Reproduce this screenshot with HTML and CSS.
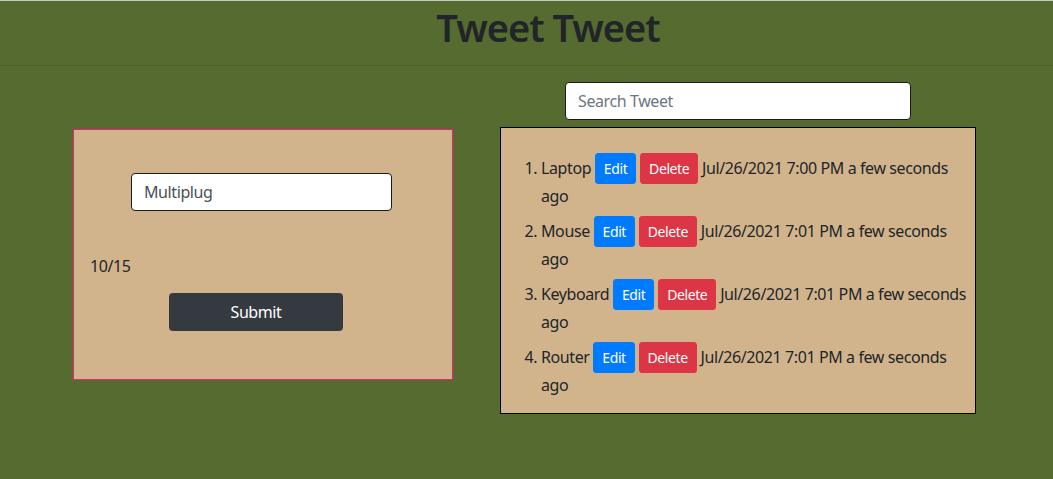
FILE: index.html
```html
<!DOCTYPE html>
<html lang="en">
<head>
<meta charset="utf-8">
<title>Tweet Tweet</title>
<link rel="stylesheet" href="styles.css">
</head>
<body>
<header class="site-header">
  <h1 class="site-title">Tweet Tweet</h1>
</header>
<main class="layout">
  <section class="composer">
    <div class="composer-card">
      <input class="text-input composer-input" type="text" value="Multiplug">
      <div class="char-count">10/15</div>
      <button class="btn-submit" type="button">Submit</button>
    </div>
  </section>
  <section class="feed">
    <input class="text-input search-input" type="text" placeholder="Search Tweet">
    <div class="feed-card">
      <ol class="tweet-list">
        <li class="tweet">Laptop <button class="btn-sm btn-edit" type="button">Edit</button> <button class="btn-sm btn-delete" type="button">Delete</button> Jul/26/2021 7:00 PM a few seconds ago</li>
        <li class="tweet">Mouse <button class="btn-sm btn-edit" type="button">Edit</button> <button class="btn-sm btn-delete" type="button">Delete</button> Jul/26/2021 7:01 PM a few seconds ago</li>
        <li class="tweet">Keyboard <button class="btn-sm btn-edit" type="button">Edit</button> <button class="btn-sm btn-delete" type="button">Delete</button> Jul/26/2021 7:01 PM a few seconds ago</li>
        <li class="tweet">Router <button class="btn-sm btn-edit" type="button">Edit</button> <button class="btn-sm btn-delete" type="button">Delete</button> Jul/26/2021 7:01 PM a few seconds ago</li>
      </ol>
    </div>
  </section>
</main>
</body>
</html>
```
FILE: styles.css
```css
* { box-sizing: border-box; }

html, body { height: 100%; }

body {
  margin: 0;
  background: #556b2f;
  border-top: 1px solid #c9c9c9;
  font-family: "Noto Sans", "Open Sans", sans-serif;
  font-size: 16px;
  line-height: 1.5;
  letter-spacing: -0.4px;
  color: #212529;
}

.site-header {
  height: 65px;
  border-bottom: 1px solid #4b5f29;
  padding: 0 0 0 43px;
}

.site-title {
  margin: 0;
  text-align: center;
  font-size: 38px;
  font-weight: 600;
  letter-spacing: -1px;
  line-height: 52px;
  color: #212529;
}

.layout {
  display: flex;
  align-items: flex-start;
}

.composer {
  margin-left: 73px;
  margin-top: 63px;
}

.composer-card {
  width: 380px;
  height: 251px;
  background: #d2b48c;
  border: 1px solid #e8217a;
  padding-top: 43px;
}

.text-input {
  display: block;
  height: 38px;
  padding: 6px 12px;
  font-family: inherit;
  font-size: 16px;
  letter-spacing: inherit;
  color: #495057;
  background: #fff;
  border: 1px solid #1b1b1b;
  border-radius: 4px;
  outline: none;
}

.text-input::placeholder { color: #6c757d; }

.composer-input {
  width: 261px;
  margin-left: 57px;
}

.char-count {
  margin-top: 43px;
  padding-left: 16px;
  line-height: 24px;
}

.btn-submit {
  display: block;
  margin: 15px 0 0 95px;
  width: 174px;
  height: 38px;
  border: none;
  border-radius: 4px;
  background: #343a40;
  color: #fff;
  font-family: inherit;
  font-size: 16px;
  letter-spacing: inherit;
}

.feed {
  margin-left: 47px;
  margin-top: 16px;
  width: 476px;
}

.search-input {
  width: 346px;
  margin: 0 auto;
}

.feed-card {
  margin-top: 7px;
  background: #d2b48c;
  border: 1px solid #000;
  padding: 8px 0;
}

.tweet-list {
  margin: 17px 0 0;
  padding: 0 0 0 40px;
}

.tweet {
  margin-bottom: 8px;
  line-height: 24px;
}

.btn-sm {
  display: inline-block;
  vertical-align: baseline;
  padding: 4px 8px;
  font-family: inherit;
  font-size: 14px;
  letter-spacing: inherit;
  line-height: 21px;
  border: 1px solid transparent;
  border-radius: 3px;
  color: #fff;
}

.btn-edit { background: #007bff; border-color: #007bff; }
.btn-delete { background: #dc3545; border-color: #dc3545; }
```
